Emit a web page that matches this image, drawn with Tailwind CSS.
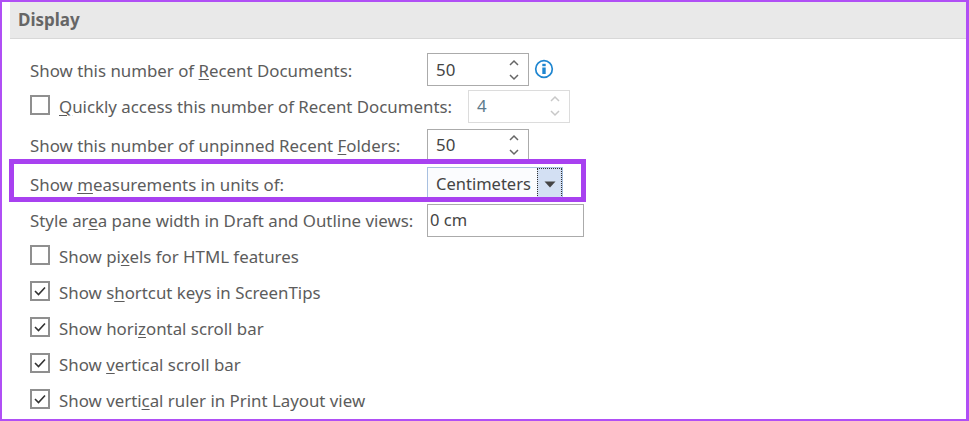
<!DOCTYPE html>
<html>
<head>
<meta charset="utf-8">
<script src="https://cdn.jsdelivr.net/npm/@tailwindcss/browser@4"></script>
</head>
<body class="bg-white">
<div class="relative w-[969px] h-[421px] overflow-hidden border-2 border-r-[3px] border-[#b04ff5] bg-white font-['Noto_Sans',sans-serif] text-[16.85px] text-[#5c5c5c]">
  <div class="ml-2 h-[37px] bg-[#e9e9e9] border-b border-[#d8d8d8] pl-2 flex items-center font-bold text-[#666666] text-[17px]">Display</div>
  <div class="flex flex-col pt-[13px]">
    <div class="h-9 flex items-center">
      <span class="ml-7 w-[397px] whitespace-nowrap translate-y-px">Show this number of <u class="underline-offset-2">R</u>ecent Documents:</span>
      <div class="w-[102px] h-[33px] mb-[2px] pt-[2px] border border-[#ababab] flex items-center justify-between pl-2 pr-[9px] text-[#444444]">
        <span>50</span>
        <svg width="10" height="26" viewBox="0 0 10 26" fill="none" stroke="#666666" stroke-width="1.5"><path d="M1 8 L5 4 L9 8"/><path d="M1 18 L5 22 L9 18"/></svg>
      </div>
      <svg class="ml-[5px] -mt-0.5" width="20" height="20" viewBox="0 0 20 20"><circle cx="10" cy="10" r="8.3" fill="none" stroke="#1f86d0" stroke-width="1.7"/><rect x="8.3" y="8.5" width="3.4" height="6.5" fill="#1f86d0"/><rect x="8.3" y="4.8" width="3.4" height="2.4" fill="#1f86d0"/></svg>
    </div>
    <div class="h-9 flex items-center">
      <span class="ml-7 size-5 mb-[3px] border-2 border-[#8f8f8f] shrink-0"></span>
      <span class="ml-[9px] w-[409px] whitespace-nowrap translate-y-px"><u class="underline-offset-2">Q</u>uickly access this number of Recent Documents:</span>
      <div class="w-[102px] h-[33px] border border-[#dcdcdc] flex items-center justify-between pl-2 pr-[9px] text-[#5d7a8c]">
        <span>4</span>
        <svg width="10" height="26" viewBox="0 0 10 26" fill="none" stroke="#c8c8c8" stroke-width="1.5"><path d="M1 8 L5 4 L9 8"/><path d="M1 18 L5 22 L9 18"/></svg>
      </div>
    </div>
    <div class="h-9 mt-[3px] flex items-center">
      <span class="ml-7 w-[397px] whitespace-nowrap translate-y-px">Show this number of unpinned Recent <u class="underline-offset-2">F</u>olders:</span>
      <div class="w-[102px] h-[33px] border border-[#ababab] flex items-center justify-between pl-2 pr-[9px] text-[#444444]">
        <span>50</span>
        <svg width="10" height="26" viewBox="0 0 10 26" fill="none" stroke="#666666" stroke-width="1.5"><path d="M1 8 L5 4 L9 8"/><path d="M1 18 L5 22 L9 18"/></svg>
      </div>
    </div>
    <div class="h-9 mt-[3px] flex items-center">
      <span class="ml-7 w-[397px] whitespace-nowrap translate-y-px">Show <u class="underline-offset-2">m</u>easurements in units of:</span>
      <div class="w-[136px] h-[34px] border border-[#a8c0e0] bg-[#fbfcfe] flex items-center justify-between pl-2 text-[#444444] text-[16.5px]">
        <span>Centimeters</span>
        <div class="w-[25px] h-full bg-[#d3e0f3] outline-1 outline-dotted outline-[#333333] -outline-offset-1 flex items-center justify-center">
          <svg width="12" height="7" viewBox="0 0 12 7"><path d="M0.5 0.5 H11.5 L6 6.5 Z" fill="#444444"/></svg>
        </div>
      </div>
    </div>
    <div class="h-9 flex items-center">
      <span class="ml-7 w-[397px] whitespace-nowrap translate-y-px">Style ar<u class="underline-offset-2">e</u>a pane width in Draft and Outline views:</span>
      <div class="w-[157px] h-[33px] border border-[#ababab] flex items-center pl-0.5 text-[#444444] text-[16.5px]">0 cm</div>
    </div>
    <div class="h-9 flex items-center">
      <span class="ml-7 size-5 mb-[3px] border-2 border-[#8f8f8f] shrink-0"></span>
      <span class="ml-[9px] whitespace-nowrap translate-y-px">Show pi<u class="underline-offset-2">x</u>els for HTML features</span>
    </div>
    <div class="h-9 flex items-center">
      <span class="ml-7 size-5 mb-[3px] border-2 border-[#8f8f8f] shrink-0 flex items-center justify-center"><svg width="12" height="10" viewBox="0 0 12 10" fill="none" stroke="#333333" stroke-width="1.6"><path d="M1 5 L4.5 8.5 L11 1.5"/></svg></span>
      <span class="ml-[9px] whitespace-nowrap translate-y-px">Show s<u class="underline-offset-2">h</u>ortcut keys in ScreenTips</span>
    </div>
    <div class="h-9 flex items-center">
      <span class="ml-7 size-5 mb-[3px] border-2 border-[#8f8f8f] shrink-0 flex items-center justify-center"><svg width="12" height="10" viewBox="0 0 12 10" fill="none" stroke="#333333" stroke-width="1.6"><path d="M1 5 L4.5 8.5 L11 1.5"/></svg></span>
      <span class="ml-[9px] whitespace-nowrap translate-y-px">Show hori<u class="underline-offset-2">z</u>ontal scroll bar</span>
    </div>
    <div class="h-9 flex items-center">
      <span class="ml-7 size-5 mb-[3px] border-2 border-[#8f8f8f] shrink-0 flex items-center justify-center"><svg width="12" height="10" viewBox="0 0 12 10" fill="none" stroke="#333333" stroke-width="1.6"><path d="M1 5 L4.5 8.5 L11 1.5"/></svg></span>
      <span class="ml-[9px] whitespace-nowrap translate-y-px">Show <u class="underline-offset-2">v</u>ertical scroll bar</span>
    </div>
    <div class="h-9 flex items-center">
      <span class="ml-7 size-5 mb-[3px] border-2 border-[#8f8f8f] shrink-0 flex items-center justify-center"><svg width="12" height="10" viewBox="0 0 12 10" fill="none" stroke="#333333" stroke-width="1.6"><path d="M1 5 L4.5 8.5 L11 1.5"/></svg></span>
      <span class="ml-[9px] whitespace-nowrap translate-y-px">Show verti<u class="underline-offset-2">c</u>al ruler in Print Layout view</span>
    </div>
  </div>
  <div class="absolute left-[7px] top-[157px] w-[577px] h-[43px] border-[5px] border-[#a841f0]"></div>
</div>
</body>
</html>
